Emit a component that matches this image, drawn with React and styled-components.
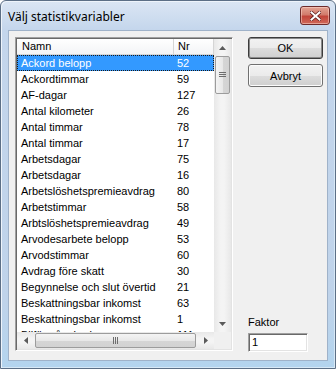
import React from 'react';
import styled, { createGlobalStyle, css } from 'styled-components';

const rows = [
  { name: 'Ackord belopp', nr: 52 },
  { name: 'Ackordtimmar', nr: 59 },
  { name: 'AF-dagar', nr: 127 },
  { name: 'Antal kilometer', nr: 26 },
  { name: 'Antal timmar', nr: 78 },
  { name: 'Antal timmar', nr: 17 },
  { name: 'Arbetsdagar', nr: 75 },
  { name: 'Arbetsdagar', nr: 16 },
  { name: 'Arbetslöshetspremieavdrag', nr: 80 },
  { name: 'Arbetstimmar', nr: 58 },
  { name: 'Arbtslöshetspremieavdrag', nr: 49 },
  { name: 'Arvodesarbete belopp', nr: 53 },
  { name: 'Arvodstimmar', nr: 60 },
  { name: 'Avdrag före skatt', nr: 30 },
  { name: 'Begynnelse och slut övertid', nr: 21 },
  { name: 'Beskattningsbar inkomst', nr: 63 },
  { name: 'Beskattningsbar inkomst', nr: 1 },
  { name: 'Bilförmån, bruks', nr: 111 },
];

const GlobalStyle = createGlobalStyle`
  body {
    margin: 0;
    background: #ffffff;
    font-family: "Liberation Sans", Arial, sans-serif;
    font-size: 11px;
    color: #000;
  }
`;

const sunken = css`
  border-style: solid;
  border-width: 1px;
  border-color: #a0a0a0 #ffffff #ffffff #a0a0a0;
  box-shadow: inset 1px 1px 0 #696969, inset -1px -1px 0 #e3e3e3;
`;

const Window = styled.div`
  width: 336px;
  height: 369px;
  box-sizing: border-box;
  display: flex;
  flex-direction: column;
  border: 1px solid #5c6f86;
  border-radius: 6px 6px 0 0;
  padding: 0 7px 7px 7px;
  background: linear-gradient(#dbe6f4 0px, #c4d6ec 29px, #bfd3ea 300px, #b3d4ee 100%);
  box-shadow: inset 1px 1px 0 #eef4fb, inset -1px -1px 0 #d7e8f6;
`;

const TitleBar = styled.div`
  height: 29px;
  flex: none;
  display: flex;
  align-items: flex-start;
  justify-content: space-between;
`;

const Title = styled.span`
  margin-top: 7px;
  font-family: "Noto Sans", "Open Sans", sans-serif;
  font-size: 12px;
  color: #000;
`;

const CloseButton = styled.div`
  width: 28px;
  height: 17px;
  margin-top: 5px;
  margin-right: -2px;
  border: 1px solid #6d2a2a;
  border-radius: 3px;
  background: linear-gradient(#e3a393 0%, #d27b6c 45%, #c2453a 55%, #d0695a 100%);
  box-shadow: inset 0 0 0 1px rgba(255, 220, 210, 0.5);
  display: flex;
  align-items: center;
  justify-content: center;
`;

const Client = styled.div`
  flex: 1;
  display: grid;
  grid-template-columns: 218px 75px;
  column-gap: 15px;
  padding: 6px;
  background: #f0f0f0;
  border: 1px solid #9fb2c9;
`;

const ListBox = styled.div`
  height: 314px;
  box-sizing: border-box;
  ${sunken};
  padding: 1px;
  display: grid;
  grid-template-columns: 197px 17px;
  grid-template-rows: 293px 17px;
  background: #fff;
`;

const ListArea = styled.div`
  overflow: hidden;
  display: flex;
  flex-direction: column;
`;

const HeaderRow = styled.div`
  height: 16px;
  flex: none;
  display: grid;
  grid-template-columns: 157px 40px;
`;

const HeaderCell = styled.div`
  box-sizing: border-box;
  padding-left: ${(p) => p.$pad}px;
  line-height: 15px;
  border-right: 1px solid #d5d5d5;
  border-bottom: 1px solid #d5d5d5;
  background: linear-gradient(#ffffff, #f3f4f6);
`;

const Row = styled.div`
  height: 16px;
  flex: none;
  display: grid;
  grid-template-columns: 157px 40px;
  line-height: 16px;
  box-sizing: border-box;
  ${(p) =>
    p.$selected &&
    css`
      background: #3399ff;
      color: #fff;
      outline: 1px dotted #1a1a1a;
      outline-offset: -1px;
    `}
`;

const Cell = styled.div`
  padding-left: ${(p) => p.$pad}px;
  white-space: nowrap;
  overflow: hidden;
`;

const ScrollBar = styled.div`
  display: flex;
  flex-direction: ${(p) => (p.$vertical ? 'column' : 'row')};
  background: ${(p) =>
    p.$vertical
      ? 'linear-gradient(90deg, #e8e8e8, #f4f4f4 40%, #f4f4f4 60%, #e8e8e8)'
      : 'linear-gradient(#e8e8e8, #f4f4f4 40%, #f4f4f4 60%, #e8e8e8)'};
`;

const Arrow = styled.div`
  width: 17px;
  height: 17px;
  flex: none;
  display: flex;
  align-items: center;
  justify-content: center;
`;

const Thumb = styled.div`
  box-sizing: border-box;
  border: 1px solid #9c9c9c;
  border-radius: 2px;
  display: flex;
  align-items: center;
  justify-content: center;
  ${(p) =>
    p.$vertical
      ? css`
          height: 38px;
          margin: 0 1px;
          background: linear-gradient(90deg, #f4f4f4, #e8e8e8 50%, #d6d6d6 51%, #d2d2d2);
        `
      : css`
          flex: 1;
          margin: 1px 1px 1px 1px;
          background: linear-gradient(#f4f4f4, #e8e8e8 50%, #d6d6d6 51%, #d2d2d2);
        `}
`;

const Track = styled.div`
  flex: 1;
`;

const Corner = styled.div`
  background: #f0f0f0;
`;

const Side = styled.div`
  display: flex;
  flex-direction: column;
  padding-bottom: 2px;
`;

const Button = styled.button`
  width: 75px;
  height: ${(p) => (p.$default ? 22 : 23)}px;
  margin-bottom: 5px;
  font-family: "Liberation Sans", Arial, sans-serif;
  font-size: 11px;
  color: #000;
  border-radius: 3px;
  border: 1px solid ${(p) => (p.$default ? '#3c3c3c' : '#707070')};
  background: linear-gradient(#f2f2f2 0%, #ebebeb 50%, #dddddd 51%, #cfcfcf 100%);
  box-shadow: inset 0 0 0 1px ${(p) => (p.$default ? '#8a8a8a' : '#fcfcfc')};
  padding: 0;
`;

const Label = styled.label`
  margin-top: auto;
  line-height: 13px;
  margin-bottom: 4px;
`;

const Input = styled.div`
  width: 60px;
  height: 19px;
  box-sizing: border-box;
  ${sunken};
  background: #fff;
  padding-left: 3px;
  line-height: 17px;
`;

const ArrowIcon = ({ dir }) => {
  const pts = {
    up: '0,4 3.5,0 7,4',
    down: '0,0 3.5,4 7,0',
    left: '4,0 0,3.5 4,7',
    right: '0,0 4,3.5 0,7',
  }[dir];
  const horiz = dir === 'left' || dir === 'right';
  return (
    <svg width={horiz ? 4 : 7} height={horiz ? 7 : 4} viewBox={horiz ? '0 0 4 7' : '0 0 7 4'}>
      <polygon points={pts} fill="#5a5a5a" />
    </svg>
  );
};

const Grip = ({ vertical }) => (
  <svg width={vertical ? 7 : 6} height={vertical ? 6 : 7}>
    {[0, 2, 4].map((o) =>
      vertical ? (
        <rect key={o} x="0" y={o} width="7" height="1" fill="#6d6d6d" />
      ) : (
        <rect key={o} x={o} y="0" width="1" height="7" fill="#6d6d6d" />
      )
    )}
  </svg>
);

const CloseX = () => (
  <svg width="11" height="10" viewBox="0 0 11 10">
    <path d="M1.5 1.5 L9.5 8.5 M9.5 1.5 L1.5 8.5" stroke="#5a1c1c" strokeWidth="3.4" strokeLinecap="square" />
    <path d="M1.5 1.5 L9.5 8.5 M9.5 1.5 L1.5 8.5" stroke="#ffffff" strokeWidth="2" strokeLinecap="square" />
  </svg>
);

export default function App() {
  return (
    <>
      <GlobalStyle />
      <Window>
        <TitleBar>
          <Title>Välj statistikvariabler</Title>
          <CloseButton>
            <CloseX />
          </CloseButton>
        </TitleBar>
        <Client>
          <ListBox>
            <ListArea>
              <HeaderRow>
                <HeaderCell $pad={5}>Namn</HeaderCell>
                <HeaderCell $pad={4}>Nr</HeaderCell>
              </HeaderRow>
              {rows.map((r, i) => (
                <Row key={i} $selected={i === 0}>
                  <Cell $pad={4}>{r.name}</Cell>
                  <Cell $pad={3}>{r.nr}</Cell>
                </Row>
              ))}
            </ListArea>
            <ScrollBar $vertical>
              <Arrow>
                <ArrowIcon dir="up" />
              </Arrow>
              <Thumb $vertical>
                <Grip vertical />
              </Thumb>
              <Track />
              <Arrow>
                <ArrowIcon dir="down" />
              </Arrow>
            </ScrollBar>
            <ScrollBar>
              <Arrow>
                <ArrowIcon dir="left" />
              </Arrow>
              <Thumb>
                <Grip />
              </Thumb>
              <Arrow>
                <ArrowIcon dir="right" />
              </Arrow>
            </ScrollBar>
            <Corner />
          </ListBox>
          <Side>
            <Button $default>OK</Button>
            <Button>Avbryt</Button>
            <Label>Faktor</Label>
            <Input>1</Input>
          </Side>
        </Client>
      </Window>
    </>
  );
}
